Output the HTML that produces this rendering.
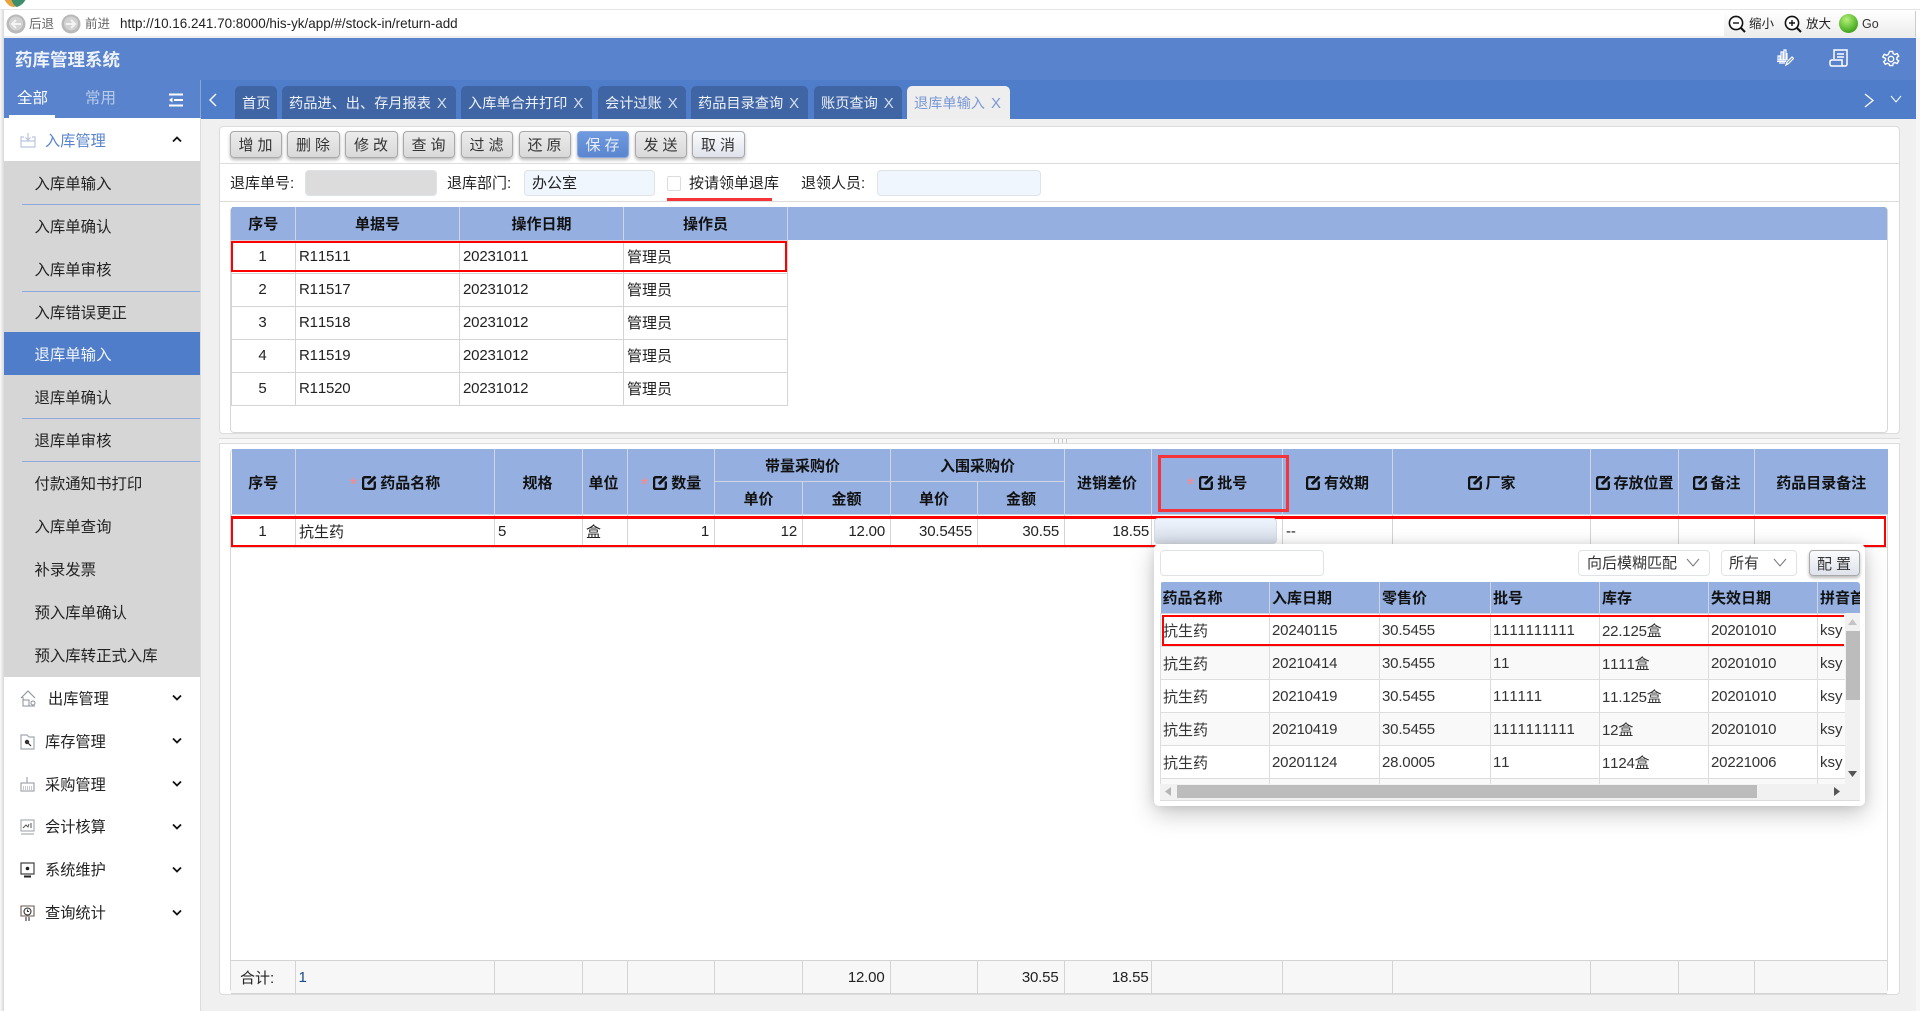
<!DOCTYPE html>
<html lang="zh-CN">
<head>
<meta charset="utf-8">
<title>药库管理系统</title>
<style>
html,body{margin:0;padding:0;width:1920px;height:1011px;overflow:hidden;background:#fff;font-family:"Liberation Sans","Noto Sans CJK SC",sans-serif;font-size:15px;color:#222;font-kerning:none}
*{box-sizing:border-box}
.a{position:absolute}
.t{position:absolute;white-space:nowrap;line-height:20px}
.mi{position:absolute;left:45px;white-space:nowrap;font-size:15.2px;line-height:20px;color:#222}
.sep{position:absolute;left:22px;width:178px;height:1px;background:#8fa9dd}
.p{position:absolute;left:34.5px;font-size:15.4px;line-height:20px;color:#222;white-space:nowrap}
.tab{position:absolute;top:86px;height:33px;background:#4065a5;border-radius:5px 5px 0 0;color:#eef2fa;font-size:14.2px;line-height:36px;padding-left:7px;white-space:nowrap}
.tab i{font-style:normal;font-size:15px;margin-left:6px;color:#d5def0}
.btn{position:absolute;top:131px;height:27px;border:1px solid #a9a9a9;border-radius:4px;background:linear-gradient(#ececec,#d9d9d9);box-shadow:0 2px 3px rgba(0,0,0,.28);text-align:center;font-size:15px;line-height:28px;letter-spacing:4px;padding-left:3px;color:#333;white-space:nowrap}
.inp{position:absolute;border:1px solid #dfe3e8;border-radius:4px}
table{border-collapse:collapse;table-layout:fixed;position:absolute}
td,th{border:1px solid #d4d4d4;padding:0 5px 0 3px;overflow:hidden;white-space:nowrap;font-size:15px;font-weight:normal}
th{background:#95b0e0;font-weight:bold;color:#111;text-align:center;border-color:#cfd6e2;padding:0}
.c{text-align:center}.r{text-align:right}
.n{letter-spacing:-.18px}
.s{color:#f88;font-weight:normal;font-size:19px;line-height:10px;vertical-align:-3px;margin-right:5px}
th svg{vertical-align:-2px;margin-right:2px}
#main th{padding-top:2px}
#main tr.d td{padding-top:2px}
#pt td{padding:2px 3px 0 2px;color:#333;border-color:#ddd}
#pt th{text-align:left;padding:0 2px;height:31px}
#pt tr.o td{background:#f9f9f9}
</style>
</head>
<body>
<svg width="0" height="0" style="position:absolute"><defs><symbol id="e" viewBox="0 0 15 14"><path d="M8.500 2H3Q1 2 1 4v7.500Q1 13 3 13h7.500q1.500 0 1.500-2V6" fill="none" stroke="#111" stroke-width="2.200"/><path d="M5.500 8.500L12.500 1.500" stroke="#111" stroke-width="2.800"/></symbol></defs></svg>
<!-- browser chrome -->
<div class="a" style="left:0;top:0;width:1920px;height:10px;overflow:hidden;background:#fff;border-bottom:1px solid #e4e4e4">
  <svg class="a" style="left:3px;top:-1px" width="24" height="10" viewBox="0 0 24 10"><path d="M1 0 Q6 9 12 8 L8 0Z" fill="#e8a33b"/><path d="M8 0 Q11 8 14 8 Q20 6 23 0Z" fill="#3e8e6e"/></svg>
  <div class="t" style="left:35px;top:-17px;font-size:13px">HIS</div>
  <div class="t" style="left:1747px;top:-17px;font-size:13px">10:24:14</div>
</div>
<div class="a" style="left:0;top:10px;width:4px;height:1001px;background:linear-gradient(90deg,#fafafa,#d8d8d8)"></div>
<div class="a" style="left:4px;top:10px;width:1912px;height:28px;background:#fff;border-bottom:2px solid #eeeeee"></div>
<svg class="a" style="left:6px;top:14px" width="20" height="20" viewBox="0 0 20 20"><circle cx="10" cy="10" r="9.500" fill="#b9b9b9"/><circle cx="10" cy="9.500" r="7" fill="#d2d2d2"/><path d="M15 10H6.500M10 6l-4 4 4 4" fill="none" stroke="#f4f4f4" stroke-width="2"/></svg>
<div class="t" style="left:29px;top:14px;font-size:12.5px;color:#666">后退</div>
<svg class="a" style="left:61px;top:14px" width="20" height="20" viewBox="0 0 20 20"><circle cx="10" cy="10" r="9.500" fill="#b9b9b9"/><circle cx="10" cy="9.500" r="7" fill="#d2d2d2"/><path d="M5 10h8.500M10 6l4 4-4 4" fill="none" stroke="#f4f4f4" stroke-width="2"/></svg>
<div class="t" style="left:85px;top:14px;font-size:12.5px;color:#666">前进</div>
<div class="t" style="left:120px;top:14px;font-size:13.45px;color:#222">http://10.16.241.70:8000/his-yk/app/#/stock-in/return-add</div>
<div class="a" style="left:1724px;top:11px;width:192px;height:26px;background:linear-gradient(#fff,#ececec);border-right:1px solid #ccc"></div>
<svg class="a" style="left:1728px;top:15px" width="19" height="18" viewBox="0 0 19 18"><circle cx="8" cy="8" r="6.600" fill="#fff" stroke="#111" stroke-width="1.600"/><path d="M13 13l4 4" stroke="#111" stroke-width="2"/><path d="M5 8h6" stroke="#111" stroke-width="1.400"/></svg>
<div class="t" style="left:1749px;top:14px;font-size:12.5px">缩小</div>
<svg class="a" style="left:1784px;top:15px" width="19" height="18" viewBox="0 0 19 18"><circle cx="8" cy="8" r="6.600" fill="#fff" stroke="#111" stroke-width="1.600"/><path d="M13 13l4 4" stroke="#111" stroke-width="2"/><path d="M5 8h6M8 5v6" stroke="#111" stroke-width="1.400"/></svg>
<div class="t" style="left:1806px;top:14px;font-size:12.5px">放大</div>
<div class="a" style="left:1839px;top:14px;width:19px;height:19px;border-radius:50%;background:radial-gradient(circle at 40% 30%,#b6f07a,#55b52c 60%,#2e7d18)"></div>
<div class="t" style="left:1862px;top:14px;font-size:12.5px;color:#333">Go</div>

<!-- header -->
<div class="a" style="left:4px;top:38px;width:1912px;height:42px;background:#5983cd"></div>
<div class="t" style="left:15px;top:50px;font-size:17.500px;font-weight:bold;color:#eef2fa">药库管理系统</div>
<svg class="a" style="left:1776px;top:49px" width="18" height="18" viewBox="0 0 18 18" fill="none" stroke="#fff" stroke-width="1.200"><path d="M2 7v4h2V7zM5 3v8h2V3zM8 1v10h2V1zM11 4v7"/><path d="M1 12.500h9"/><path d="M3 14h6M10 16l1-3 5-5 1.500 1.500-5 5z"/></svg>
<svg class="a" style="left:1829px;top:49px" width="20" height="18" viewBox="0 0 20 18" fill="none" stroke="#fff" stroke-width="1.500"><path d="M5 10V1h13v14q0 2-2 2H3q-2 0-2-2v-2q0-2 2-2h10v4q0 2 2 2"/><path d="M8 5h7M8 8h7"/></svg>
<svg class="a" style="left:1882px;top:50px" width="18" height="18" viewBox="0 0 18 18" fill="none" stroke="#fff" stroke-width="1.400"><path d="M7.500 1h3l.5 2.300 1.700.8 2.200-1 1.600 2.600-1.800 1.500v1.800l1.800 1.500-1.600 2.600-2.200-1-1.700.8-.5 2.300h-3L7 13.700l-1.700-.8-2.200 1-1.600-2.600 1.800-1.500V8L.5 6.500 2.100 3.900l2.200 1 1.700-.8z" transform="translate(.2 .4)"/><circle cx="9" cy="9" r="2.700"/></svg>

<!-- tab bar -->
<div class="a" style="left:4px;top:80px;width:196px;height:38px;background:#5983cd"></div>
<div class="t" style="left:17px;top:89px;font-size:15.500px;color:#fff">全部</div>
<div class="a" style="left:9px;top:115px;width:46px;height:3px;background:#fff"></div>
<div class="t" style="left:85px;top:89px;font-size:15.500px;color:#b9cae9">常用</div>
<svg class="a" style="left:169px;top:93px" width="14" height="14" viewBox="0 0 14 14"><path d="M0 1.500h14M5 7h9M0 12.500h14" stroke="#fff" stroke-width="2"/><path d="M3.500 4.500L0 7l3.500 2.500z" fill="#fff"/></svg>
<div class="a" style="left:200px;top:80px;width:1716px;height:39px;background:#4f7dca;border-left:1px solid #8aa5da"></div>
<svg class="a" style="left:208px;top:93px" width="10" height="14" viewBox="0 0 10 14"><path d="M8 1L2 7l6 6" fill="none" stroke="#fff" stroke-width="1.400"/></svg>
<div class="tab" style="left:235px;width:42px">首页</div>
<div class="tab" style="left:282px;width:174px">药品进、出、存月报表<i>X</i></div>
<div class="tab" style="left:461px;width:131px">入库单合并打印<i>X</i></div>
<div class="tab" style="left:598px;width:88px">会计过账<i>X</i></div>
<div class="tab" style="left:691px;width:117px">药品目录查询<i>X</i></div>
<div class="tab" style="left:814px;width:88px">账页查询<i>X</i></div>
<div class="tab" style="left:907px;width:103px;background:#eee;color:#7a98d6">退库单输入<i style="color:#7a98d6">X</i></div>
<svg class="a" style="left:1864px;top:93px" width="11" height="15" viewBox="0 0 11 15"><path d="M1 1l8 6.500-8 6.500" fill="none" stroke="#fff" stroke-width="1.300"/></svg>
<svg class="a" style="left:1890px;top:95px" width="12" height="8" viewBox="0 0 12 8"><path d="M1 1l5 6 5-6" fill="none" stroke="#fff" stroke-width="1"/></svg>

<!-- sidebar -->
<div class="a" style="left:4px;top:118px;width:196px;height:893px;background:#fff"></div>
<div class="a" style="left:200px;top:118px;width:1px;height:893px;background:#dcdcdc"></div>
<div class="a" style="left:4px;top:161px;width:196px;height:516px;background:#d6d6d6"></div>
<div class="a" style="left:4px;top:332px;width:196px;height:43px;background:#4f7dca"></div>
<div class="sep" style="top:204px"></div><div class="sep" style="top:291px"></div><div class="sep" style="top:418px"></div><div class="sep" style="top:461px"></div>
<svg class="a" style="left:20px;top:132px" width="16" height="16" viewBox="0 0 16 16" fill="none" stroke="#b9c4dc" stroke-width="1.200"><path d="M4 5H1v10h14V5h-3M1 9h14"/><path d="M8 1v7M5.500 5.500L8 8l2.500-2.500"/></svg>
<div class="mi" style="top:132px;color:#5983cd">入库管理</div>
<svg class="a" style="left:172px;top:136px" width="10" height="7" viewBox="0 0 10 7"><path d="M1 5.500L5 1.500l4 4" fill="none" stroke="#111" stroke-width="1.800"/></svg>
<div class="p" style="top:175px">入库单输入</div>
<div class="p" style="top:218px">入库单确认</div>
<div class="p" style="top:261px">入库单审核</div>
<div class="p" style="top:304px">入库错误更正</div>
<div class="p" style="top:346px;color:#f2f5fb">退库单输入</div>
<div class="p" style="top:389px">退库单确认</div>
<div class="p" style="top:432px">退库单审核</div>
<div class="p" style="top:475px">付款通知书打印</div>
<div class="p" style="top:518px">入库单查询</div>
<div class="p" style="top:561px">补录发票</div>
<div class="p" style="top:604px">预入库单确认</div>
<div class="p" style="top:647px">预入库转正式入库</div>

<svg class="a" style="left:20px;top:690px" width="17" height="17" viewBox="0 0 17 17" fill="none" stroke="#8a8f98" stroke-width="1"><path d="M1 8L8 1l7 7M3 7v9h12"/><rect x="3" y="10" width="6" height="6"/><circle cx="13" cy="13" r="2"/></svg>
<div class="mi" style="top:690px;left:48px">出库管理</div>
<svg class="a" style="left:20px;top:734px" width="15" height="16" viewBox="0 0 15 16" fill="none" stroke="#a3a8b3" stroke-width="1.200"><path d="M1 1h6l2 2h5v12H1z"/><circle cx="7" cy="8" r="2.200" fill="#333" stroke="none"/><path d="M8 9l3 3" stroke="#333"/></svg>
<div class="mi" style="top:733px">库存管理</div>
<svg class="a" style="left:20px;top:777px" width="15" height="15" viewBox="0 0 15 15" fill="none" stroke="#8f939b" stroke-width="1"><path d="M7 0v6M1 14V6h13v8z"/><path d="M3 10h9M3 12h9" stroke-dasharray="1 1"/></svg>
<div class="mi" style="top:776px">采购管理</div>
<svg class="a" style="left:20px;top:819px" width="15" height="16" viewBox="0 0 15 16" fill="none" stroke="#9a9da5" stroke-width="1"><path d="M1 1h13v11H1zM1 15h13"/><path d="M3 9l3-3 2 2 1-3M11 4v5" stroke="#555"/></svg>
<div class="mi" style="top:818px">会计核算</div>
<svg class="a" style="left:20px;top:862px" width="15" height="16" viewBox="0 0 15 16" fill="none" stroke="#444" stroke-width="1.200"><path d="M1 1h13v11H1z"/><path d="M4 14.500h7" stroke-width="2" stroke="#222"/><circle cx="7.500" cy="6.500" r="1.800" fill="#222" stroke="none"/></svg>
<div class="mi" style="top:861px">系统维护</div>
<svg class="a" style="left:20px;top:905px" width="15" height="17" viewBox="0 0 15 17" fill="none" stroke="#6a5a50" stroke-width="1.100"><path d="M1 1h13v10H1z"/><circle cx="7.500" cy="6.500" r="3.500" stroke="#333"/><path d="M7.500 4.500v2h1.500M6 12v4M9 12v4" stroke="#333"/></svg>
<div class="mi" style="top:904px">查询统计</div>
<svg class="a" style="left:172px;top:694px" width="10" height="7" viewBox="0 0 10 7"><path d="M1 1.500l4 4 4-4" fill="none" stroke="#111" stroke-width="1.800"/></svg>
<svg class="a" style="left:172px;top:737px" width="10" height="7" viewBox="0 0 10 7"><path d="M1 1.500l4 4 4-4" fill="none" stroke="#111" stroke-width="1.800"/></svg>
<svg class="a" style="left:172px;top:780px" width="10" height="7" viewBox="0 0 10 7"><path d="M1 1.500l4 4 4-4" fill="none" stroke="#111" stroke-width="1.800"/></svg>
<svg class="a" style="left:172px;top:823px" width="10" height="7" viewBox="0 0 10 7"><path d="M1 1.500l4 4 4-4" fill="none" stroke="#111" stroke-width="1.800"/></svg>
<svg class="a" style="left:172px;top:866px" width="10" height="7" viewBox="0 0 10 7"><path d="M1 1.500l4 4 4-4" fill="none" stroke="#111" stroke-width="1.800"/></svg>
<svg class="a" style="left:172px;top:909px" width="10" height="7" viewBox="0 0 10 7"><path d="M1 1.500l4 4 4-4" fill="none" stroke="#111" stroke-width="1.800"/></svg>

<!-- content bg -->
<div class="a" style="left:201px;top:119px;width:1715px;height:892px;background:#f0f0f0"></div>
<div class="a" style="left:1916px;top:38px;width:4px;height:973px;background:#f6f6f6"></div>

<!-- top panel -->
<div class="a" style="left:219px;top:126px;width:1681px;height:308px;background:#fff;border:1px solid #dcdcdc;border-radius:4px"></div>
<div class="a" style="left:220px;top:163px;width:1679px;height:1px;background:#dcdcdc"></div>
<div class="a" style="left:220px;top:201px;width:1679px;height:1px;background:#dcdcdc"></div>
<div class="btn" style="left:230px;width:52px">增加</div>
<div class="btn" style="left:287px;width:53px">删除</div>
<div class="btn" style="left:345px;width:53px">修改</div>
<div class="btn" style="left:403px;width:52px">查询</div>
<div class="btn" style="left:461px;width:52px">过滤</div>
<div class="btn" style="left:519px;width:52px">还原</div>
<div class="btn" style="left:577px;width:52px;background:linear-gradient(#6f9ae0,#5b86cf);border-color:#8aa8dc;color:#e8effa">保存</div>
<div class="btn" style="left:635px;width:52px">发送</div>
<div class="btn" style="left:692px;width:53px;background:linear-gradient(#fafbfd,#dfe3ec)">取消</div>

<div class="t" style="left:230px;top:174px">退库单号:</div>
<div class="inp" style="left:305px;top:170px;width:132px;height:26px;background:#dcdcdc"></div>
<div class="t" style="left:447px;top:174px">退库部门:</div>
<div class="inp" style="left:524px;top:170px;width:131px;height:26px;background:#f0f6fd"></div>
<div class="t" style="left:532px;top:174px">办公室</div>
<div class="a" style="left:667px;top:176px;width:14px;height:15px;background:#fff;border:1px solid #dcdcdc;border-radius:2px"></div>
<div class="t" style="left:689px;top:174px">按请领单退库</div>
<div class="a" style="left:667px;top:198px;width:105px;height:3px;background:#f5333b"></div>
<div class="t" style="left:801px;top:174px">退领人员:</div>
<div class="inp" style="left:877px;top:170px;width:164px;height:26px;background:#f0f6fd"></div>

<!-- top table -->
<div class="a" style="left:230px;top:207px;width:1658px;height:226px;background:#fff;border:1px solid #d8d8d8;border-radius:4px"></div>
<div class="a" style="left:231px;top:207px;width:1656px;height:33px;background:#95b0e0;border-radius:3px 3px 0 0"></div>
<table style="left:231px;top:207px;width:556px">
<colgroup><col style="width:64px"><col style="width:164px"><col style="width:164px"><col style="width:164px"></colgroup>
<tr style="height:33px"><th style="border-top:0;border-left:0">序号</th><th style="border-top:0">单据号</th><th style="border-top:0">操作日期</th><th style="border-top:0">操作员</th></tr>
<tr style="height:33px"><td class="c n">1</td><td class="n">R11511</td><td class="n">20231011</td><td>管理员</td></tr>
<tr style="height:33px"><td class="c n">2</td><td class="n">R11517</td><td class="n">20231012</td><td>管理员</td></tr>
<tr style="height:33px"><td class="c n">3</td><td class="n">R11518</td><td class="n">20231012</td><td>管理员</td></tr>
<tr style="height:33px"><td class="c n">4</td><td class="n">R11519</td><td class="n">20231012</td><td>管理员</td></tr>
<tr style="height:33px"><td class="c n">5</td><td class="n">R11520</td><td class="n">20231012</td><td>管理员</td></tr>
</table>
<div class="a" style="left:231px;top:241px;width:556px;height:31px;border:2px solid #f00"></div>

<!-- splitter -->
<div class="a" style="left:219px;top:438px;width:1681px;height:6px;border-top:1px solid #dcdcdc;border-bottom:1px solid #dcdcdc;background:#f8f8f8"></div>
<div class="a" style="left:1054px;top:439px;width:16px;height:4px;background:repeating-linear-gradient(90deg,#c8c8c8 0,#c8c8c8 1px,transparent 1px,transparent 4px)"></div>

<!-- bottom panel -->
<div class="a" style="left:219px;top:444px;width:1681px;height:551px;background:#fff;border:1px solid #dcdcdc;border-top:0;border-radius:0 0 4px 4px"></div>
<div class="a" style="left:230px;top:449px;width:1658px;height:544px;background:#fff;border:1px solid #d8d8d8;border-radius:4px"></div>
<table id="main" style="left:231px;top:449px;width:1656px">
<colgroup><col style="width:64px"><col style="width:199px"><col style="width:88px"><col style="width:45px"><col style="width:87px"><col style="width:88px"><col style="width:88px"><col style="width:87px"><col style="width:87px"><col style="width:87px"><col style="width:131px"><col style="width:110px"><col style="width:198px"><col style="width:88px"><col style="width:76px"><col style="width:133px"></colgroup>
<tr style="height:32px">
<th rowspan="2" style="border-top:0;border-left:0">序号</th>
<th rowspan="2" style="border-top:0"><span class="s">*</span><svg width="16" height="15"><use href="#e"/></svg>药品名称</th>
<th rowspan="2" style="border-top:0;padding-right:2px">规格</th>
<th rowspan="2" style="border-top:0;padding-right:3px">单位</th>
<th rowspan="2" style="border-top:0"><span class="s">*</span><svg width="16" height="15"><use href="#e"/></svg>数量</th>
<th colspan="2" style="border-top:0">带量采购价</th>
<th colspan="2" style="border-top:0">入围采购价</th>
<th rowspan="2" style="border-top:0;padding-right:2px">进销差价</th>
<th rowspan="2" style="border-top:0"><span class="s">*</span><svg width="16" height="15"><use href="#e"/></svg>批号</th>
<th rowspan="2" style="border-top:0"><svg width="16" height="15"><use href="#e"/></svg>有效期</th>
<th rowspan="2" style="border-top:0"><svg width="16" height="15"><use href="#e"/></svg>厂家</th>
<th rowspan="2" style="border-top:0"><svg width="16" height="15"><use href="#e"/></svg>存放位置</th>
<th rowspan="2" style="border-top:0"><svg width="16" height="15"><use href="#e"/></svg>备注</th>
<th rowspan="2" style="border-top:0;border-right:0">药品目录备注</th>
</tr>
<tr style="height:33px"><th>单价</th><th>金额</th><th>单价</th><th>金额</th></tr>
<tr style="height:33px" class="d"><td class="c n">1</td><td>抗生药</td><td class="n">5</td><td>盒</td><td class="r n">1</td><td class="r n">12</td><td class="r n">12.00</td><td class="r n">30.5455</td><td class="r n">30.55</td><td class="r n" style="padding-right:2px">18.55</td><td></td><td class="n">--</td><td></td><td></td><td></td><td style="border-right:0"></td></tr>
</table>
<div class="a" style="left:231px;top:516px;width:1655px;height:31px;border:2px solid #f00;border-top-width:3px"></div>
<div class="a" style="left:1158px;top:455px;width:131px;height:57px;border:3px solid #f5333b"></div>
<div class="a" style="left:1154px;top:518px;width:123px;height:26px;border:1px solid #d6dbe2;border-radius:4px;background:linear-gradient(#eef4fc,#d6dde8)"></div>

<!-- footer -->
<table style="left:231px;top:960px;width:1656px">
<colgroup><col style="width:64px"><col style="width:199px"><col style="width:88px"><col style="width:45px"><col style="width:87px"><col style="width:88px"><col style="width:88px"><col style="width:87px"><col style="width:87px"><col style="width:87px"><col style="width:131px"><col style="width:110px"><col style="width:198px"><col style="width:88px"><col style="width:76px"><col style="width:133px"></colgroup>
<tr style="height:33px;background:#f7f7f7"><td style="padding-left:9px;border-left:0">合计:</td><td class="n" style="color:#1a4a8a">1</td><td></td><td></td><td></td><td></td><td class="r n">12.00</td><td></td><td class="r n">30.55</td><td class="r n" style="padding-right:2px">18.55</td><td></td><td></td><td></td><td></td><td></td><td style="border-right:0"></td></tr>
</table>

<!-- popup -->
<div class="a" style="left:1154px;top:544px;width:711px;height:262px;background:#fff;border-radius:5px;box-shadow:0 8px 24px rgba(0,0,0,.22),0 0 10px rgba(0,0,0,.1)"></div>
<div class="inp" style="left:1160px;top:550px;width:164px;height:26px;background:#fff"></div>
<div class="inp" style="left:1578px;top:550px;width:132px;height:26px;background:#fff"></div>
<div class="t" style="left:1587px;top:554px;color:#333">向后模糊匹配</div>
<svg class="a" style="left:1686px;top:558px" width="14" height="9" viewBox="0 0 14 9"><path d="M1 1l6 7 6-7" fill="none" stroke="#777" stroke-width="1"/></svg>
<div class="inp" style="left:1721px;top:550px;width:76px;height:26px;background:#fff"></div>
<div class="t" style="left:1729px;top:554px;color:#333">所有</div>
<svg class="a" style="left:1773px;top:558px" width="14" height="9" viewBox="0 0 14 9"><path d="M1 1l6 7 6-7" fill="none" stroke="#777" stroke-width="1"/></svg>
<div class="btn" style="left:1809px;top:550px;width:51px;height:26px;background:linear-gradient(#fafbfd,#dfe3ec)">配置</div>
<div class="a" style="left:1160px;top:582px;width:700px;height:202px;overflow:hidden;border-radius:3px 3px 0 0">
<table id="pt" style="left:0;top:0;width:760px">
<colgroup><col style="width:109px"><col style="width:110px"><col style="width:111px"><col style="width:109px"><col style="width:109px"><col style="width:109px"><col style="width:103px"></colgroup>
<tr><th style="border-top:0;border-left:0">药品名称</th><th style="border-top:0">入库日期</th><th style="border-top:0">零售价</th><th style="border-top:0">批号</th><th style="border-top:0">库存</th><th style="border-top:0">失效日期</th><th style="border-top:0">拼音首码</th></tr>
<tr style="height:33px"><td>抗生药</td><td class="n">20240115</td><td class="n">30.5455</td><td class="n">1111111111</td><td class="n">22.125盒</td><td class="n">20201010</td><td>ksy</td></tr>
<tr style="height:33px" class="o"><td>抗生药</td><td class="n">20210414</td><td class="n">30.5455</td><td class="n">11</td><td class="n">1111盒</td><td class="n">20201010</td><td>ksy</td></tr>
<tr style="height:33px"><td>抗生药</td><td class="n">20210419</td><td class="n">30.5455</td><td class="n">111111</td><td class="n">11.125盒</td><td class="n">20201010</td><td>ksy</td></tr>
<tr style="height:33px" class="o"><td>抗生药</td><td class="n">20210419</td><td class="n">30.5455</td><td class="n">1111111111</td><td class="n">12盒</td><td class="n">20201010</td><td>ksy</td></tr>
<tr style="height:33px"><td>抗生药</td><td class="n">20201124</td><td class="n">28.0005</td><td class="n">11</td><td class="n">1124盒</td><td class="n">20221006</td><td>ksy</td></tr>
<tr style="height:33px" class="o"><td></td><td></td><td></td><td></td><td></td><td></td><td></td></tr>
</table>
</div>
<div class="a" style="left:1162px;top:615px;width:682px;height:31px;border:2px solid #f00;border-right:0"></div>
<!-- v scrollbar -->
<div class="a" style="left:1845px;top:613px;width:15px;height:171px;background:#f1f1f1"></div>
<div class="a" style="left:1846px;top:631px;width:14px;height:69px;background:#bcbcbc"></div>
<svg class="a" style="left:1848px;top:619px" width="9" height="6" viewBox="0 0 9 6"><path d="M4.500 0L9 6H0z" fill="#c4c4c4"/></svg>
<svg class="a" style="left:1848px;top:771px" width="9" height="6" viewBox="0 0 9 6"><path d="M4.500 6L9 0H0z" fill="#555"/></svg>
<!-- h scrollbar -->
<div class="a" style="left:1160px;top:784px;width:700px;height:17px;background:#f1f1f1;border-bottom:1px solid #dcdcdc"></div>
<div class="a" style="left:1177px;top:785px;width:580px;height:13px;background:#bcbcbc"></div>
<svg class="a" style="left:1165px;top:787px" width="6" height="9" viewBox="0 0 6 9"><path d="M0 4.500L6 0v9z" fill="#b5b5b5"/></svg>
<svg class="a" style="left:1834px;top:787px" width="6" height="9" viewBox="0 0 6 9"><path d="M6 4.500L0 0v9z" fill="#555"/></svg>
</body>
</html>
